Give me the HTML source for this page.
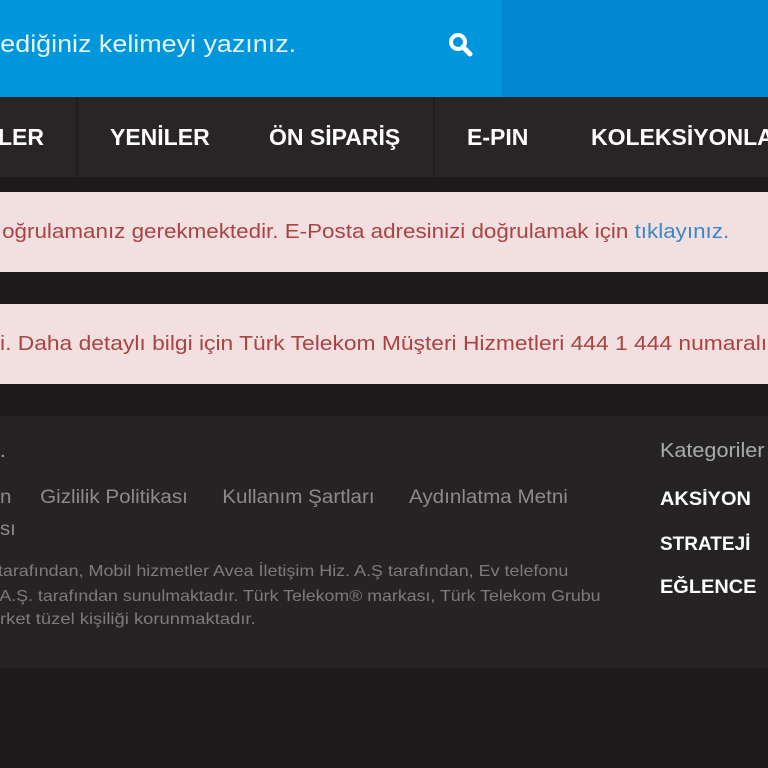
<!DOCTYPE html>
<html><head><meta charset="utf-8"><style>
*{margin:0;padding:0;box-sizing:border-box}
body{width:768px;height:768px;overflow:hidden;background:#1c1a1b;font-family:"Liberation Sans",sans-serif;position:relative}
.a{position:absolute;white-space:nowrap}
.r{transform-origin:right center}
.l{transform-origin:left center}
</style></head><body>
<div class="a" style="left:0;top:0;width:502px;height:97px;background:#0096dc"></div>
<div class="a" style="left:502px;top:0;width:266px;height:97px;background:#0288d2"></div>
<div class="a r" style="right:472px;top:31px;font-size:24px;color:#e6f4fc;transform:scaleX(1.12)">ediğiniz kelimeyi yazınız.</div>
<svg class="a" style="left:447px;top:31px" width="28" height="28" viewBox="0 0 28 28"><circle cx="11" cy="11" r="7" fill="none" stroke="#fff" stroke-width="4"/><line x1="16" y1="16" x2="23" y2="23" stroke="#fff" stroke-width="5" stroke-linecap="round"/></svg>
<div class="a" style="left:0;top:97px;width:768px;height:80px;background:#292526"></div>
<div class="a" style="left:76px;top:97px;width:2px;height:80px;background:#201d1e"></div>
<div class="a" style="left:433px;top:97px;width:2px;height:80px;background:#201d1e"></div>
<div class="a" style="top:124px;font-size:23px;font-weight:bold;color:#fff;left:0;width:768px;height:30px">
<span class="a r" style="right:724px">İLER</span>
<span class="a l" style="left:110px">YENİLER</span>
<span class="a l" style="left:269px">ÖN SİPARİŞ</span>
<span class="a l" style="left:467px">E-PIN</span>
<span class="a l" style="left:591px">KOLEKSİYONLAR</span>
</div>
<div class="a" style="left:0;top:192px;width:768px;height:80px;background:#f2dfdf"></div>
<div class="a r" style="right:39px;top:221px;font-size:20px;color:#a94442;transform:scaleX(1.12)">oğrulamanız gerekmektedir. E-Posta adresinizi doğrulamak için <span style="color:#3a87c7">tıklayınız.</span></div>
<div class="a" style="left:0;top:304px;width:768px;height:80px;background:#f2dfdf"></div>
<div class="a l" style="left:0;top:333px;font-size:20px;color:#a94442;transform:scaleX(1.14)">i. Daha detaylı bilgi için Türk Telekom Müşteri Hizmetleri 444 1 444 numaralı</div>
<div class="a" style="left:0;top:416px;width:768px;height:252px;background:#262324"></div>
<div class="a" style="left:0;top:440px;font-size:20px;color:#aaa">.</div>
<div class="a l" style="left:0;top:487px;font-size:19px;color:#8d8a8a;transform:scaleX(1.085)">n&nbsp;&nbsp;&nbsp;&nbsp;&nbsp;Gizlilik Politikası&nbsp;&nbsp;&nbsp;&nbsp;&nbsp;&nbsp;Kullanım Şartları&nbsp;&nbsp;&nbsp;&nbsp;&nbsp;&nbsp;Aydınlatma Metni</div>
<div class="a l" style="left:0;top:519px;font-size:19px;color:#8d8a8a;transform:scaleX(1.07)">sı</div>
<div class="a r" style="right:200px;top:563px;font-size:16px;color:#7e7b7b;transform:scaleX(1.12)">tarafından, Mobil hizmetler Avea İletişim Hiz. A.Ş tarafından, Ev telefonu</div>
<div class="a r" style="right:167px;top:588px;font-size:16px;color:#7e7b7b;transform:scaleX(1.11)">A.Ş. tarafından sunulmaktadır. Türk Telekom® markası, Türk Telekom Grubu</div>
<div class="a l" style="left:0;top:611px;font-size:16px;color:#7e7b7b;transform:scaleX(1.15)">rket tüzel kişiliği korunmaktadır.</div>
<div class="a l" style="left:660px;top:440px;font-size:20px;color:#aaa;transform:scaleX(1.08)">Kategoriler</div>
<div class="a l" style="left:660px;top:489px;font-size:19px;font-weight:bold;color:#fff;transform:scaleX(1.05)">AKSİYON</div>
<div class="a l" style="left:660px;top:534px;font-size:19px;font-weight:bold;color:#fff;transform:scaleX(1.0)">STRATEJİ</div>
<div class="a l" style="left:660px;top:577px;font-size:19px;font-weight:bold;color:#fff;transform:scaleX(1.05)">EĞLENCE</div>
</body></html>
